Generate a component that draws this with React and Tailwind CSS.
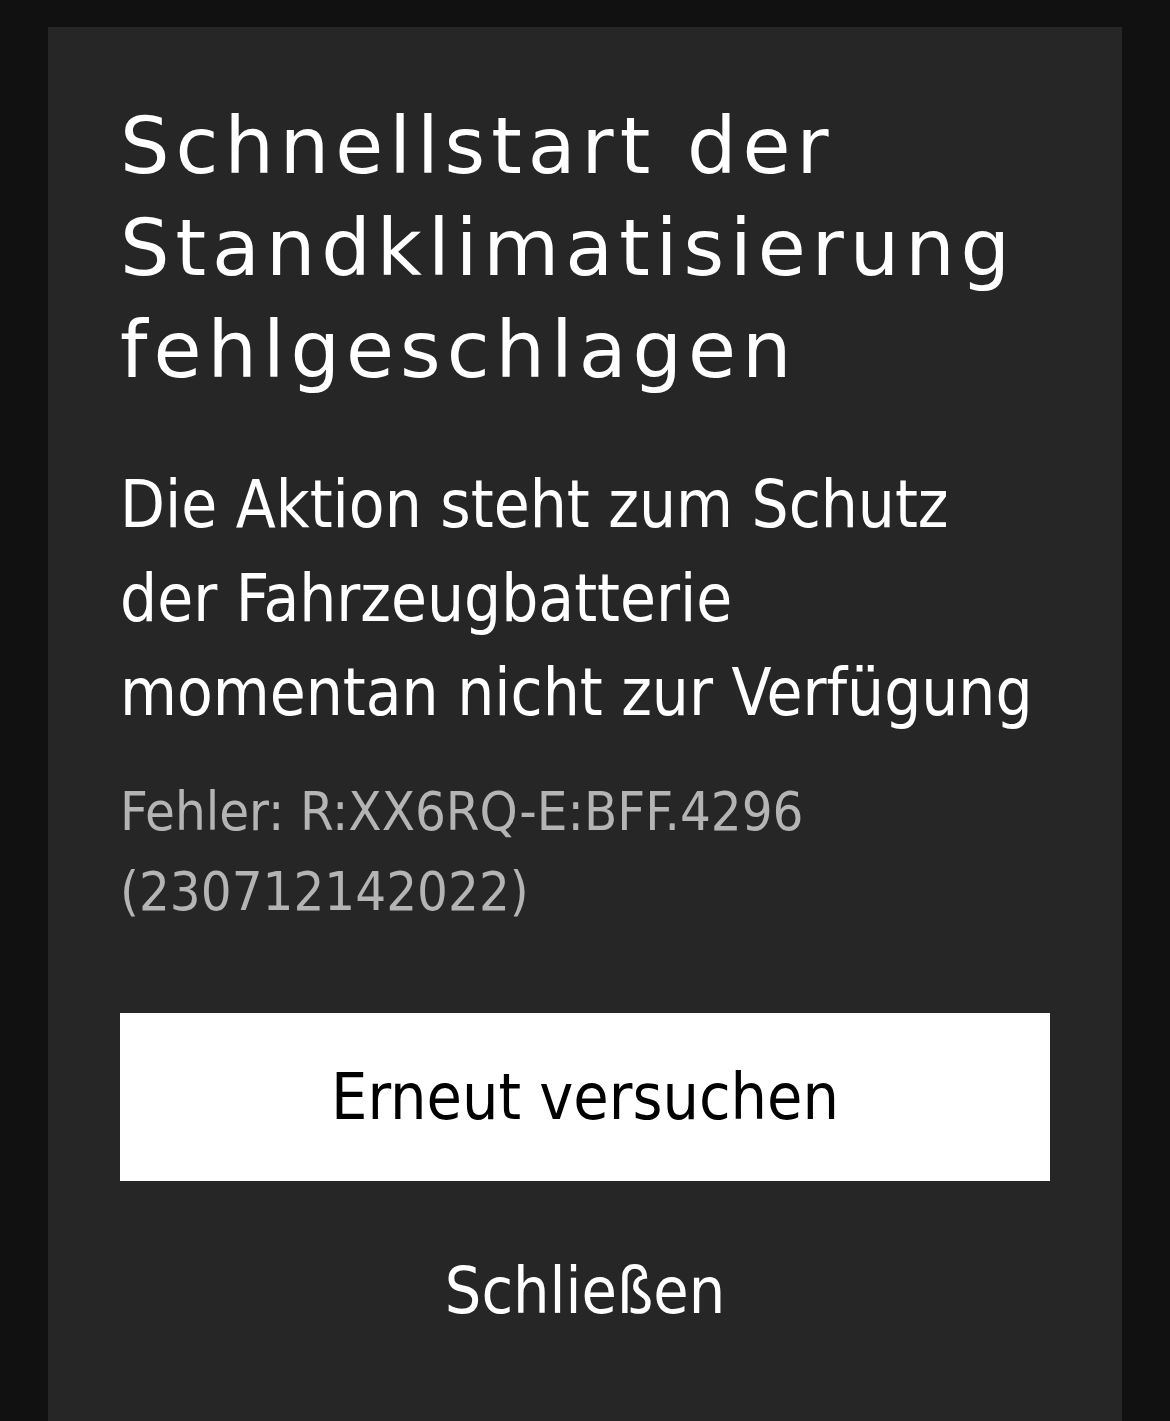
export default function App() {
  return (
    <div className="min-h-[1421px] bg-[#111111] px-[48px] pt-[27px]">
      <div className="min-h-[1394px] bg-[#262626] px-[72px] pt-[68px] text-white">
        <h1
          className="text-[78px] leading-[102px] tracking-[6px] font-normal"
          style={{ fontFamily: '"DejaVu Sans", sans-serif' }}
        >
          Schnellstart der
          <br />
          Standklimatisierung
          <br />
          fehlgeschlagen
        </h1>
        <div style={{ fontFamily: '"DejaVu Sans Condensed", "DejaVu Sans", sans-serif', fontStretch: "condensed" }}>
          <p className="mt-[57px] text-[65px] leading-[94px]">
            Die Aktion steht zum Schutz
            <br />
            der Fahrzeugbatterie
            <br />
            momentan nicht zur Verfügung
          </p>
          <p className="mt-[32px] text-[54px] leading-[80px] text-[#b4b4b4]">
            Fehler: R:XX6RQ-E:BFF.4296
            <br />
            (230712142022)
          </p>
          <button className="mt-[81px] flex h-[168px] w-full items-center justify-center bg-white text-[64px] text-black">
            Erneut versuchen
          </button>
          <button className="mt-[40px] flex h-[140px] w-full items-center justify-center text-[64px] text-white">
            Schließen
          </button>
        </div>
      </div>
    </div>
  );
}
